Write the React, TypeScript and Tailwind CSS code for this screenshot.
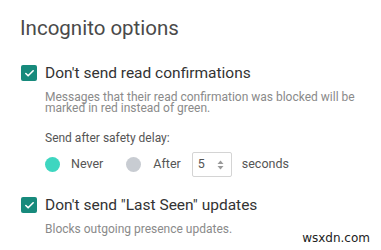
import { Check } from 'lucide-react'

function CheckBox() {
  return (
    <span className="flex h-[16px] w-[16px] shrink-0 items-center justify-center rounded-[2px] bg-[#178a7c]">
      <Check className="h-[11px] w-[11px] text-white" strokeWidth={3.5} />
    </span>
  )
}

export default function App() {
  return (
    <div className="relative h-[250px] w-[381px] overflow-hidden bg-white font-['Roboto',sans-serif]">
      <div className="px-5 pt-[15px]">
        <h1 className="text-[20.5px] leading-[26px] text-[#4a4a4a]">Incognito options</h1>

        <div className="mt-[23px] flex items-center gap-[8px] pl-px">
          <CheckBox />
          <span className="text-[15.5px] leading-[18px] text-[#333]">Don't send read confirmations</span>
        </div>
        <p className="mt-[10px] pl-[25px] text-[12px] leading-[11px] text-[#8a8a8a]">
          Messages that their read confirmation was blocked will be marked in red instead of green.
        </p>

        <p className="mt-[17px] pl-[25px] text-[12px] leading-[14px] text-[#555]">Send after safety delay:</p>
        <div className="mt-[7px] flex items-center pl-[25px] text-[12.5px] text-[#555]">
          <span className="h-[15px] w-[15px] rounded-full bg-[#3ed6c0]" />
          <span className="ml-[11px]">Never</span>
          <span className="ml-[23px] h-[15px] w-[15px] rounded-full bg-[#c8ccd2]" />
          <span className="ml-[12px]">After</span>
          <div className="ml-[11px] flex h-[25px] w-[40px] items-center justify-between rounded-[2px] border border-[#d4d4d4] pl-[5px] pr-[7px]">
            <span>5</span>
            <svg width="7" height="10" viewBox="0 0 7 10">
              <path d="M3.5 0.5 L6.5 4 L0.5 4 Z" fill="#9a9a9a" />
              <path d="M3.5 9.5 L6.5 6 L0.5 6 Z" fill="#9a9a9a" />
            </svg>
          </div>
          <span className="ml-[10px]">seconds</span>
        </div>

        <div className="mt-[19px] flex items-center gap-[8px] pl-px">
          <CheckBox />
          <span className="text-[15.5px] leading-[18px] text-[#333]">Don't send "Last Seen" updates</span>
        </div>
        <p className="mt-[8px] pl-[25px] text-[12px] leading-[14px] text-[#8a8a8a]">Blocks outgoing presence updates.</p>
      </div>
      <span className="absolute bottom-[3px] right-[11px] font-['DejaVu_Sans',sans-serif] text-[12px] text-[#222]">wsxdn.com</span>
    </div>
  )
}
